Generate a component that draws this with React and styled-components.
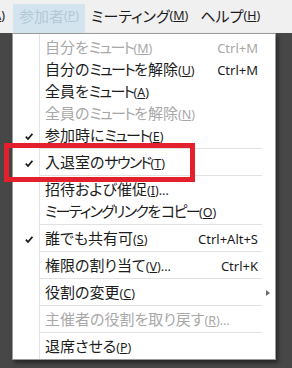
import React from "react";
import styled, { createGlobalStyle } from "styled-components";

const Global = createGlobalStyle`
  html, body { margin: 0; padding: 0; background: #474747; }
  #root { width: 292px; height: 368px; overflow: hidden; }
`;

const Screen = styled.div`
  position: relative;
  width: 292px;
  height: 368px;
  background: #474747;
  font-family: "Noto Sans", "Noto Sans CJK JP", sans-serif;
  font-feature-settings: "palt";
  overflow: hidden;
`;

const MenuBar = styled.div`
  display: flex;
  align-items: stretch;
  height: 33px;
  padding-top: 4px;
  box-sizing: border-box;
  background: #f0f0f0;
`;

const BarItem = styled.div`
  display: flex;
  align-items: center;
  padding: 0 6px 5px;
  font-size: 15px;
  line-height: 20px;
  color: ${(p) => (p.$active ? "#b3c9d6" : "#1c1c1c")};
  background: ${(p) => (p.$active ? "#d3e4ee" : "transparent")};
  white-space: nowrap;
`;

const LeadItem = styled(BarItem)`
  width: 13px;
  box-sizing: border-box;
  padding: 0 8px 5px 0;
  justify-content: flex-end;
  overflow: hidden;
`;

const Acc = styled.span`
  font-size: 12.5px;
  letter-spacing: 0;
`;

const Kana = styled.span`
  letter-spacing: -1.7px;
`;

const Dropdown = styled.div`
  margin-left: 12px;
  width: 264px;
  box-sizing: border-box;
  border: 1px solid #9a9a9a;
  background: #ffffff;
  box-shadow: 2px 3px 4px rgba(0, 0, 0, 0.45);
`;

const List = styled.div`
  padding: 2px 0;
  background: linear-gradient(
    to right,
    transparent 26px,
    #e4e4e4 26px,
    #e4e4e4 27px,
    transparent 27px
  );
`;

const Row = styled.div`
  display: grid;
  grid-template-columns: 26px 1fr auto 17px;
  align-items: center;
  height: 22px;
  font-size: 15px;
  line-height: 22px;
  color: ${(p) => (p.$disabled ? "#a8a8a8" : "#1c1c1c")};
  white-space: nowrap;
`;

const CheckCell = styled.div`
  display: flex;
  align-items: center;
  padding-left: 12px;
  height: 22px;
`;

const Label = styled.div`
  padding-left: 6px;
`;

const Shortcut = styled.div`
  font-size: 13px;
`;

const ArrowCell = styled.div`
  display: flex;
  align-items: center;
  padding-left: 8px;
  height: 22px;
`;

const Separator = styled.div`
  height: 1px;
  margin: 2px 13px 2px 27px;
  background: #e2e2e2;
`;

const Highlight = styled.div`
  position: absolute;
  left: 4px;
  top: 143px;
  width: 191px;
  height: 39px;
  box-sizing: border-box;
  border: 5px solid #e3202c;
`;

const Check = () => (
  <svg width="8" height="7" viewBox="0 0 8 7">
    <path d="M0.8 3.6 L3 6 L7.4 0.8" fill="none" stroke="#1a1a1a" strokeWidth="1.7" />
  </svg>
);

const Arrow = () => (
  <svg width="4" height="6" viewBox="0 0 4 6">
    <path d="M0 0 L4 3 L0 6 Z" fill="#6a6a6a" />
  </svg>
);

// Katakana runs are set tighter, as the UI font draws them narrower.
const JpText = ({ text }) =>
  text.split(/([\u30A0-\u30FF]+)/).map((part, i) =>
    /[\u30A0-\u30FF]/.test(part) ? <Kana key={i}>{part}</Kana> : part
  );

const items = [
  { t: "自分をミュート", a: "M", sc: "Ctrl+M", dis: true },
  { t: "自分のミュートを解除", a: "U", sc: "Ctrl+M" },
  { t: "全員をミュート", a: "A" },
  { t: "全員のミュートを解除", a: "N", dis: true },
  { t: "参加時にミュート", a: "E", chk: true },
  { sep: true },
  { t: "入退室のサウンド", a: "T", chk: true },
  { sep: true },
  { t: "招待および催促", a: "I", ell: true },
  { t: "ミーティングリンクをコピー", a: "O" },
  { sep: true },
  { t: "誰でも共有可", a: "S", sc: "Ctrl+Alt+S", chk: true },
  { sep: true },
  { t: "権限の割り当て", a: "V", sc: "Ctrl+K", ell: true },
  { sep: true },
  { t: "役割の変更", a: "C", sub: true },
  { sep: true },
  { t: "主催者の役割を取り戻す", a: "R", ell: true, dis: true },
  { sep: true },
  { t: "退席させる", a: "P" },
];

export default function App() {
  return (
    <Screen>
      <Global />
      <MenuBar>
        <LeadItem>
          <Acc>(<u>A</u>)</Acc>
        </LeadItem>
        <BarItem $active>
          参加者<Acc>(<u>P</u>)</Acc>
        </BarItem>
        <BarItem>
          ミーティング<Acc>(<u>M</u>)</Acc>
        </BarItem>
        <BarItem>
          ヘルプ<Acc>(<u>H</u>)</Acc>
        </BarItem>
      </MenuBar>
      <Dropdown>
        <List>
          {items.map((it, i) =>
            it.sep ? (
              <Separator key={i} />
            ) : (
              <Row key={i} $disabled={it.dis}>
                <CheckCell>{it.chk ? <Check /> : null}</CheckCell>
                <Label>
                  <JpText text={it.t} />
                  <Acc>
                    (<u>{it.a}</u>){it.ell ? "..." : ""}
                  </Acc>
                </Label>
                <Shortcut>{it.sc || ""}</Shortcut>
                <ArrowCell>{it.sub ? <Arrow /> : null}</ArrowCell>
              </Row>
            )
          )}
        </List>
      </Dropdown>
      <Highlight />
    </Screen>
  );
}
